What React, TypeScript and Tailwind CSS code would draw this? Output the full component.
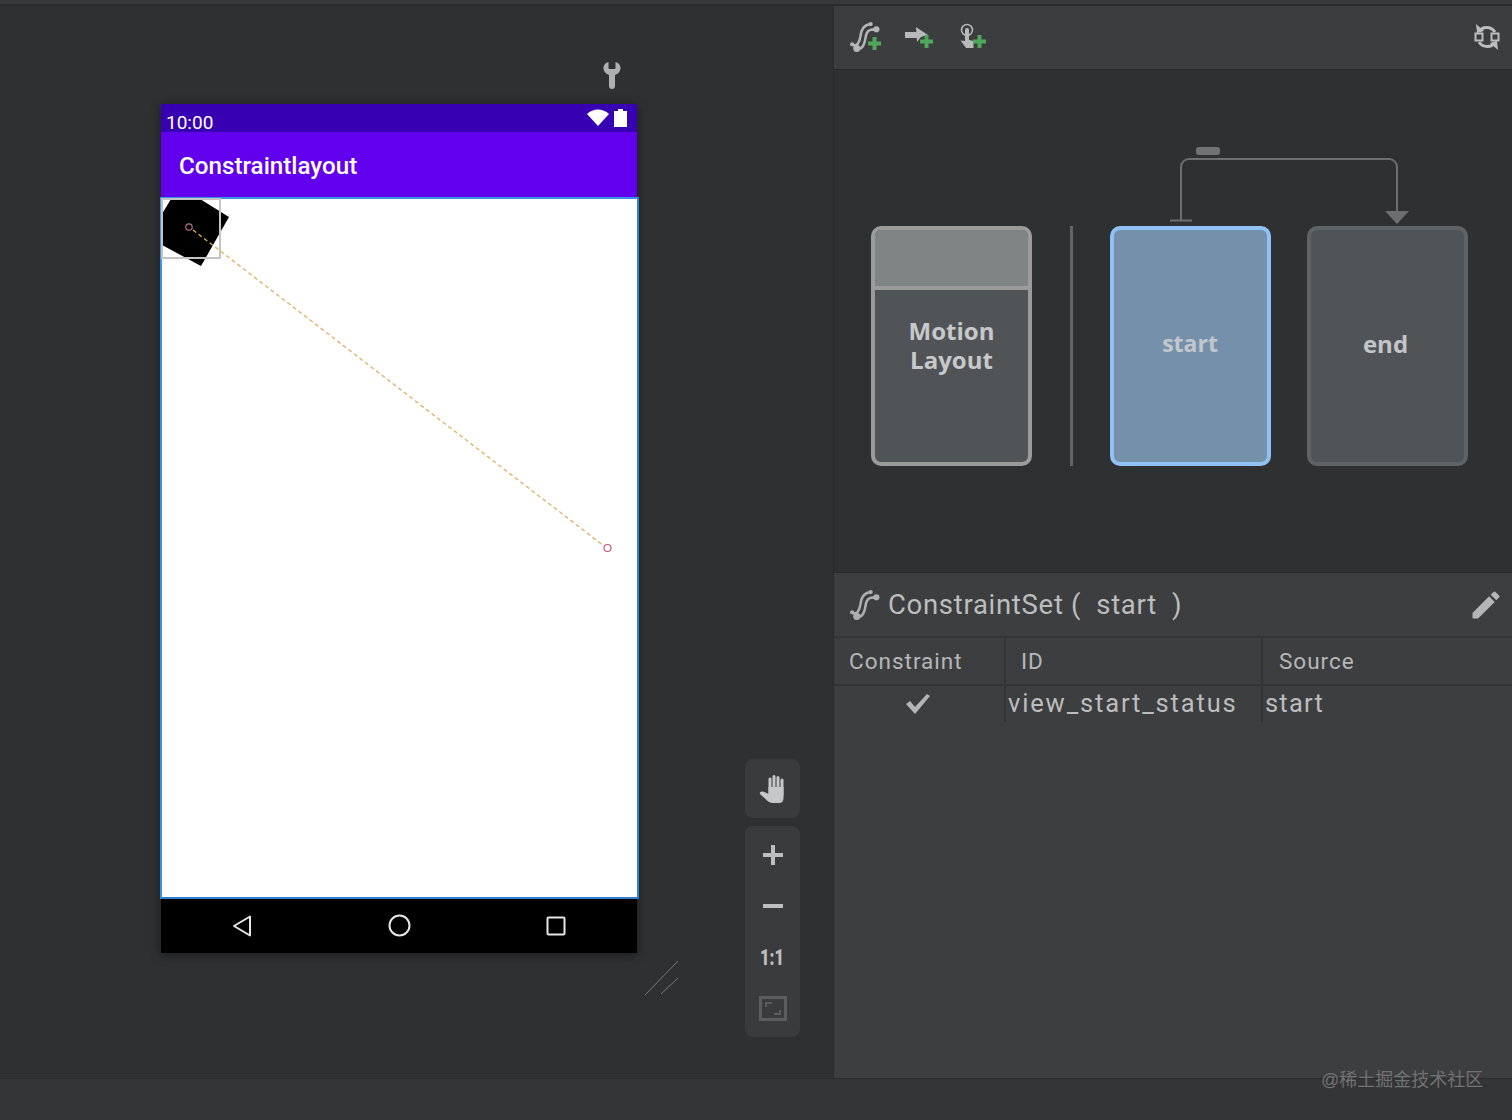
import React from "react";

function MotionIcon({ size = 26, color = "#b4b5b6" }: { size?: number; color?: string }) {
  return (
    <svg width={size} height={size} viewBox="0 0 30 30" fill="none" stroke={color} strokeLinecap="round">
      <path d="M3 23 C8 25 10 21 11 15 C12 8 14 4 21 3" strokeWidth="2.400" />
      <path d="M7 27 C13 28 15 23 16 16 C17 10 19 8 26 8" strokeWidth="2.400" />
      <circle cx="26.500" cy="8" r="3" fill={color} stroke="none" />
      <circle cx="7.500" cy="26.500" r="3.400" fill={color} stroke="none" />
      <circle cx="3" cy="22.500" r="2" fill={color} stroke="none" />
      <circle cx="21" cy="3" r="2" fill={color} stroke="none" />
    </svg>
  );
}

function Plus({ className }: { className: string }) {
  return (
    <svg width="13" height="13" viewBox="0 0 13 13" className={`absolute ${className}`}>
      <path d="M4.500 0h4v4.500H13v4H8.500V13h-4V8.500H0v-4h4.500z" fill="#4fa75c" />
    </svg>
  );
}

function ToolbarIcons() {
  return (
    <div className="flex items-center h-full pl-[15px]">
      <div className="relative w-[34px] h-[34px]">
        <MotionIcon size={31} />
        <Plus className="left-[19px] top-[16px]" />
      </div>
      <div className="relative w-[30px] h-[30px] ml-[22px]">
        <svg width="30" height="30" viewBox="0 0 30 30" className="absolute left-0 top-0">
          <path d="M0 9h13V15H0z" fill="#b8b9ba" />
          <path d="M11 4l12 8-7 2-4 5z" fill="#b8b9ba" />
        </svg>
        <Plus className="left-[15px] top-[12px]" />
      </div>
      <div className="relative w-[28px] h-[30px] ml-[24px]">
        <svg width="28" height="30" viewBox="0 0 28 30" className="absolute left-0 top-0">
          <circle cx="8" cy="7" r="5.500" fill="none" stroke="#b8b9ba" strokeWidth="1.500" />
          <path d="M6 7a2 2 0 0 1 4 0v10l4.500 1v7H7L1.500 17.500 6 18z" fill="#b8b9ba" />
        </svg>
        <Plus className="left-[14px] top-[12px]" />
      </div>
    </div>
  );
}

function Card({ children, className }: { children?: React.ReactNode; className: string }) {
  return (
    <div className={`w-[161px] h-[240px] rounded-[10px] border-[4px] flex items-center justify-center font-bold text-[24px] leading-[29px] text-[#c3c6c8] text-center overflow-hidden ${className}`}>
      {children}
    </div>
  );
}

export default function App() {
  return (
    <div className="relative w-full h-[1120px] overflow-hidden flex flex-col bg-[#2f3032] [font-family:'Roboto','Liberation_Sans',sans-serif]">
      <div className="h-[4px] bg-[#38393b] shrink-0" />
      <div className="h-[2px] bg-[#2a2b2d] shrink-0" />
      <div className="flex flex-1 min-h-0">
        {/* Design surface */}
        <div className="relative w-[833px] shrink-0 bg-[#2f3032] pl-[161px] pt-[98px]">
          <div className="w-[476px] shadow-[0_2px_10px_rgba(0,0,0,0.45)]">
            <div className="h-[28px] bg-[#3700b3] flex items-center justify-between pl-[5px] pr-[10px]">
              <span className="text-white text-[19px] leading-none mt-[8px]">10:00</span>
              <div className="flex items-center gap-[5px] -mt-[1px]">
                <svg width="22" height="17" viewBox="0 0 22 17">
                  <path d="M0 5 C6 -1 16 -1 22 5 L11 17z" fill="#fff" />
                </svg>
                <svg width="13" height="18" viewBox="0 0 13 18">
                  <path d="M4 0h5v2h4v16H0V2h4z" fill="#fff" />
                </svg>
              </div>
            </div>
            <div className="h-[65px] bg-[#6200ee] flex items-center pl-[18px]">
              <span className="text-white text-[24.200px] font-medium leading-none mt-[3px]">Constraintlayout</span>
            </div>
            <div className="relative h-[702px] -ml-px -mr-0.5 bg-white border-2 border-[#2f7fd0] border-t-[#3a94e6] border-l-[#3a94e6]">
              <svg className="absolute inset-0 w-full h-full overflow-visible" viewBox="162 199 475 698">
                <path d="M171 199 L200 199 L229 217 L201 266 L162 245 L162 214z" fill="#000" />
                <rect x="162" y="199" width="58" height="59" fill="none" stroke="#c4c4c4" strokeWidth="2" />
                <path d="M193 230 L604 546" stroke="#e0b061" strokeWidth="1.300" strokeDasharray="4 3" fill="none" />
                <circle cx="189" cy="227" r="3.200" fill="none" stroke="#b4718b" strokeWidth="1.200" />
                <circle cx="607.500" cy="548" r="3.500" fill="none" stroke="#c75a74" strokeWidth="1.200" />
              </svg>
            </div>
            <div className="h-[54px] bg-black flex items-center justify-between pl-[71px] pr-[71px]">
              <svg width="20" height="22" viewBox="0 0 20 22" fill="none" stroke="#e6e6e6" strokeWidth="2" strokeLinejoin="round" className="-mt-[1px]">
                <path d="M18 1.500V20.500L2 11z" />
              </svg>
              <svg width="23" height="23" viewBox="0 0 23 23" fill="none" stroke="#e6e6e6" strokeWidth="2" className="-mt-[1px]">
                <circle cx="11.500" cy="11.500" r="10" />
              </svg>
              <svg width="20" height="20" viewBox="0 0 20 20" fill="none" stroke="#e6e6e6" strokeWidth="2" className="-mt-[1px]">
                <rect x="1.500" y="1.500" width="17" height="17" rx="1" />
              </svg>
            </div>
          </div>

          {/* Wrench over canvas */}
          <svg className="absolute left-[603px] top-[56px]" width="18" height="27" viewBox="0 0 18 27">
            <path d="M5.500 0 V6 a1 1 0 0 0 1 1 H11.500 a1 1 0 0 0 1-1 V0 C16 1 18 4 17.500 7 C17 10 15 12 12 13 V24 a3 3 0 0 1-6 0 V13 C3 12 1 10 .5 7 C0 4 2 1 5.500 0z" fill="#aeafb0" />
          </svg>

          {/* Resize handle */}
          <svg className="absolute left-[644px] top-[954px]" width="36" height="36" viewBox="0 0 36 36" stroke="#77787a" strokeWidth="1">
            <path d="M1 35 L34 1" />
            <path d="M17 34 L34 18" />
          </svg>

          {/* Zoom controls */}
          <div className="absolute left-[745px] top-[753px] flex flex-col gap-[8px] w-[55px]">
            <div className="h-[59px] rounded-lg bg-[#3a3b3d] flex items-center justify-center">
              <svg width="28" height="30" viewBox="0 0 28 30" fill="#c6c7c8">
                <path d="M11 21 V5 M15 21 V2.500 M19 21 V3.500 M23 21 V6" stroke="#c6c7c8" strokeWidth="3" strokeLinecap="round" />
                <path d="M9.500 13 H24.500 V24 C24.500 27 23 29 20 29 H14 C11 29 9 27.500 7 25.500 L1 20 C0 18 3 16.500 5.500 18 L9.500 20z" />
              </svg>
            </div>
            <div className="h-[211px] rounded-lg bg-[#3a3b3d] flex flex-col items-center">
              <div className="h-[51px] mt-[3px] flex items-center justify-center">
                <svg width="20" height="20" viewBox="0 0 20 20"><path d="M8 0h4v8h8v4h-8v8H8v-8H0V8h8z" fill="#bdbebf" /></svg>
              </div>
              <div className="h-[51px] flex items-center justify-center">
                <svg width="20" height="4" viewBox="0 0 20 4"><path d="M0 0h20v4H0z" fill="#bdbebf" /></svg>
              </div>
              <div className="h-[51px] pt-[2px] flex items-center justify-center text-[#bdbebf] font-black text-[22px] scale-x-75 leading-none">1:1</div>
              <div className="h-[51px] pt-[2px] flex items-center justify-center">
                <svg width="28" height="25" viewBox="0 0 28 25" fill="none" stroke="#5c5d5f">
                  <rect x="1.500" y="1.500" width="25" height="22" strokeWidth="3" />
                  <path d="M7 11V7h6M21 14v4h-6" strokeWidth="2" />
                </svg>
              </div>
            </div>
          </div>
        </div>

        {/* Right pane */}
        <div className="flex-1 min-w-0 flex flex-col border-l border-[#2a2b2d]">
          <div className="relative h-[63px] shrink-0 bg-[#3c3d3f]">
            <ToolbarIcons />
            <svg className="absolute right-[12px] top-[16px]" width="26" height="30" viewBox="0 0 26 30" fill="none" stroke="#bcbdbe" strokeWidth="3">
              <path d="M5 10 C8 4 17 4 21 10" />
              <path d="M21 20 C18 26 9 26 5 20" />
              <path d="M2 2 L3 11 L10 9z" fill="#bcbdbe" stroke="none" />
              <path d="M24 28 L23 19 L16 21z" fill="#bcbdbe" stroke="none" />
              <rect x="1.500" y="11.500" width="7" height="7" strokeWidth="2" fill="#3c3d3f" />
              <rect x="17.500" y="11.500" width="7" height="7" strokeWidth="2" fill="#3c3d3f" />
            </svg>
          </div>

          <div className="relative h-[503px] shrink-0 bg-[#2f3032] border-t border-[#28292b] pl-[37px] pt-[156px] flex items-start [font-family:'Open_Sans','Liberation_Sans',sans-serif]">
            <svg className="absolute left-0 top-0" width="678" height="160" viewBox="834 70 678 160" fill="none">
              <rect x="1196" y="147" width="24" height="8" rx="3" fill="#717274" />
              <path d="M1181 220 V167 a8 8 0 0 1 8-8 H1389 a8 8 0 0 1 8 8 V212" stroke="#6d6e70" strokeWidth="2" />
              <path d="M1170 220.500 H1192" stroke="#6d6e70" strokeWidth="2" />
              <path d="M1385 211 H1409 L1397 224z" fill="#6d6e70" />
            </svg>
            <Card className="border-[#9a9b9b] bg-[#505457] flex-col !justify-start">
              <div className="w-full h-[60px] bg-[#7f8484] border-b-[4px] border-[#9a9b9b] shrink-0" />
              <div className="mt-[26px] text-[#c6c8ca]">Motion<br />Layout</div>
            </Card>
            <div className="w-[3px] h-[240px] bg-[#646567] ml-[38px] mr-[37px]" />
            <Card className="border-[#8fc1f5] bg-[#7590ab]"><span className="-mt-[5px] -ml-[1px] text-[#c2c7cc] text-[23px]">start</span></Card>
            <div className="w-[36px] shrink-0" />
            <Card className="border-[#5f6365] bg-[#505457]"><span className="-mt-[6px] -ml-[4px]">end</span></Card>
          </div>

          <div className="flex-1 min-h-0 bg-[#3d3e40] border-t border-[#28292b] text-[#b9babb]">
            <div className="h-[65px] flex items-center pl-[15px] pr-[8px] border-b-2 border-[#343537]">
              <MotionIcon size={31} color="#aeafb0" />
              <span className="ml-[8px] text-[27.500px] tracking-[0.700px] whitespace-pre text-[#bcbdbe]">ConstraintSet (  start  )</span>
              <svg className="ml-auto" width="36" height="36" viewBox="0 0 24 24">
                <path d="M3 17.250V21h3.750L17.810 9.940l-3.750-3.750L3 17.250zM20.710 7.040a1 1 0 0 0 0-1.410l-2.340-2.340a1 1 0 0 0-1.410 0l-1.830 1.830 3.750 3.750 1.830-1.830z" fill="#b4b5b6" />
              </svg>
            </div>
            <div className="h-[48px] flex items-stretch border-b-2 border-[#333436] text-[22.500px] tracking-[1px] text-[#b6b7b8]">
              <div className="w-[172px] pl-[15px] flex items-center border-r-2 border-[#333436] pt-[1px]">Constraint</div>
              <div className="w-[257px] pl-[15px] flex items-center border-r-2 border-[#333436] pt-[1px]">ID</div>
              <div className="flex-1 pl-[16px] flex items-center pt-[1px]">Source</div>
            </div>
            <div className="h-[36px] flex items-stretch text-[25.500px] text-[#bcbdbe]">
              <div className="w-[172px] flex items-center justify-center border-r-2 border-[#333436]">
                <svg width="26" height="22" viewBox="0 0 26 22" className="mr-[2px]">
                  <path d="M1 11l4-3 5 6L22 1l3 2L10 21z" fill="#b4b5b6" />
                </svg>
              </div>
              <div className="w-[257px] pl-[2px] flex items-center border-r-2 border-[#333436] tracking-[1.850px] pb-[1px]">view_start_status</div>
              <div className="flex-1 pl-[2px] flex items-center tracking-[1.200px] pb-[1px]">start</div>
            </div>
          </div>
        </div>
      </div>
      <div className="h-[42px] shrink-0 bg-[#343537] border-t border-[#2b2c2e]" />
      <div className="absolute left-[1321px] top-[1069px] text-[18px] leading-[22px] text-[#717274] whitespace-nowrap [font-family:'Liberation_Sans','Noto_Sans_CJK_SC',sans-serif]">@稀土掘金技术社区</div>
    </div>
  );
}
